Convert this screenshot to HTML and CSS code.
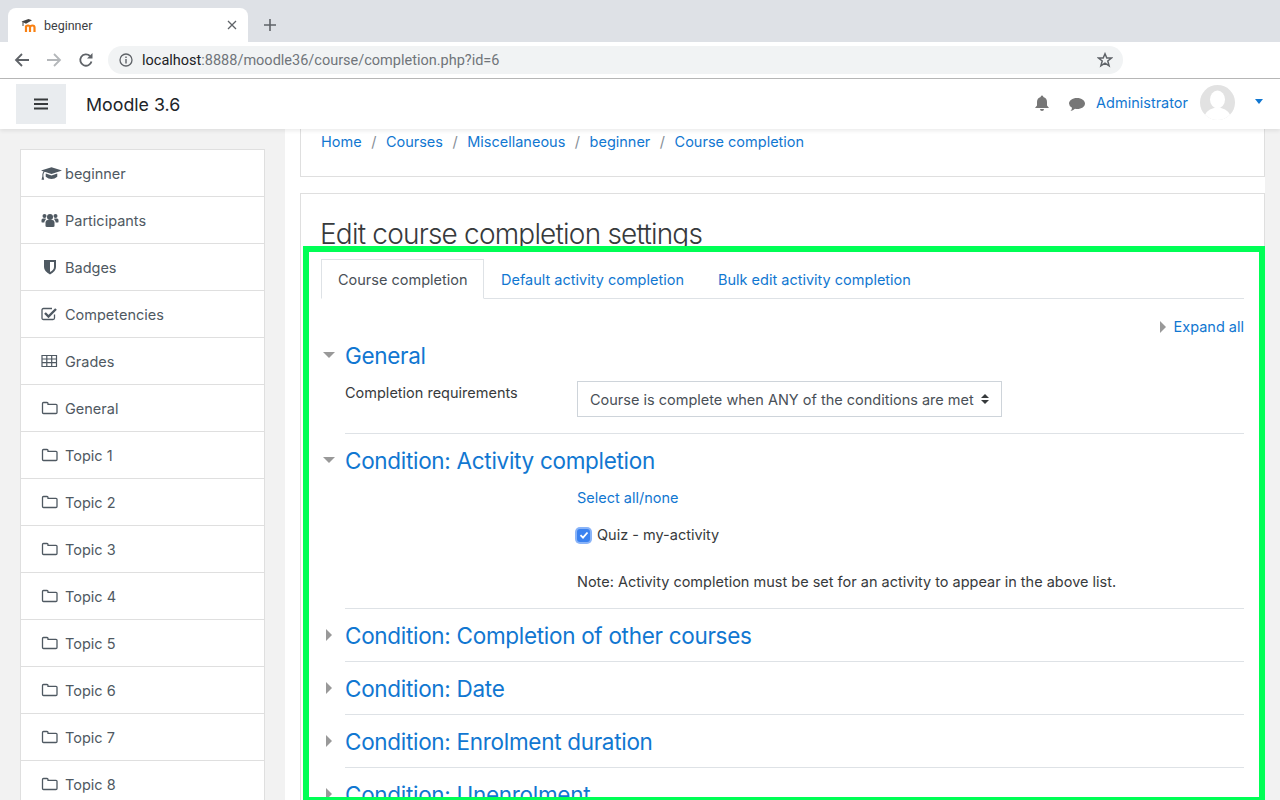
FILE: index.html
```html
<!DOCTYPE html>
<html lang="en">
<head>
    <meta charset="UTF-8">
    <meta name="viewport" content="width=device-width, initial-scale=1.0">
    <title>beginner</title>
    <link rel="stylesheet" href="styles.css">
</head>
<body>
    <div class="tab-strip">
        <div class="browser-tab">
            <svg class="favicon" viewBox="0 0 16 16" width="16" height="16">
                <path d="M5 8.500V15M9 8.500V15M13.500 15V10.500Q13.500 8.500 11.500 8.500Q9 8.500 9 10.500M9 10.500Q9 8.500 7 8.500Q5 8.500 5 10.500" fill="none" stroke="#f98012" stroke-width="2.200"/>
                <path d="M0.500 4.500L7.500 2L11 3.200L5 6.800Z" fill="#444"/>
                <path d="M2 5V9" stroke="#444" stroke-width="1"/>
            </svg>
            <span class="tab-title">beginner</span>
            <svg class="tab-close" viewBox="0 0 10 10" width="10" height="10"><path d="M1 1L9 9M9 1L1 9" stroke="#5f6368" stroke-width="1.300"/></svg>
        </div>
        <svg class="new-tab" viewBox="0 0 12 12" width="12" height="12"><path d="M6 0V12M0 6H12" stroke="#5f6368" stroke-width="1.600"/></svg>
    </div>

    <div class="toolbar">
        <svg class="tool-btn" viewBox="0 0 16 16" width="16" height="16"><path d="M15 8H2M8 2L2 8L8 14" fill="none" stroke="#5f6368" stroke-width="1.800"/></svg>
        <svg class="tool-btn" viewBox="0 0 16 16" width="16" height="16"><path d="M1 8H14M8 2L14 8L8 14" fill="none" stroke="#b4b7ba" stroke-width="1.800"/></svg>
        <svg class="tool-btn" viewBox="0 0 16 16" width="16" height="16"><path d="M13.500 9.500A5.700 5.700 0 1 1 12 4" fill="none" stroke="#5f6368" stroke-width="1.800"/><path d="M14.500 1V6.500H9Z" fill="#5f6368"/></svg>
        <div class="url-bar">
            <svg class="url-info" viewBox="0 0 14 14" width="14" height="14"><circle cx="7" cy="7" r="6" fill="none" stroke="#5f6368" stroke-width="1.300"/><path d="M7 6V10.500M7 3.500V5" stroke="#5f6368" stroke-width="1.400"/></svg>
            <span class="url-text"><span class="url-host">localhost</span>:8888/moodle36/course/completion.php?id=6</span>
            <svg class="url-star" viewBox="0 0 16 16" width="16" height="16"><path d="M8 1.800L9.800 6H14.500L10.800 9L12.100 13.800L8 11.200L3.900 13.800L5.200 9L1.500 6H6.200Z" fill="none" stroke="#5f6368" stroke-width="1.500"/></svg>
        </div>
    </div>

    <header class="navbar">
        <button class="nav-toggle">
            <svg viewBox="0 0 14 12" width="14" height="12"><path d="M0 1.500H14M0 6H14M0 10.500H14" stroke="#373a3c" stroke-width="2.200"/></svg>
        </button>
        <span class="brand">Moodle 3.6</span>
        <div class="nav-right">
            <svg class="nav-icon" viewBox="0 0 16 16" width="16" height="16"><path d="M8 0.500A1.300 1.300 0 0 1 9.300 2Q13 3 13 7V10.500L15 13H1L3 10.500V7Q3 3 6.700 2A1.300 1.300 0 0 1 8 0.500ZM6 14H10A2 2 0 0 1 6 14Z" fill="#777"/></svg>
            <svg class="nav-icon nav-icon-comment" viewBox="0 0 18 16" width="18" height="16"><path d="M9 2C13.700 2 17 4.500 17 7.500S13.700 13 9 13Q8 13 7 12.800Q5 14.500 2.500 15Q4 13.500 4 11.700Q1 10 1 7.500C1 4.500 4.300 2 9 2Z" fill="#777"/></svg>
            <a class="nav-user" href="#">Administrator</a>
            <svg class="avatar" viewBox="0 0 35 35" width="35" height="35">
                <clipPath id="avatar-clip"><circle cx="17.500" cy="17.500" r="17.500"/></clipPath>
                <g clip-path="url(#avatar-clip)">
                    <rect width="35" height="35" fill="#e2e2e2"/>
                    <ellipse cx="17.500" cy="14.500" rx="7.500" ry="9" fill="#fff"/>
                    <path d="M3 35Q5 25 14 23H21Q30 25 32 35Z" fill="#fff"/>
                </g>
            </svg>
            <span class="nav-caret"></span>
        </div>
    </header>

    <div class="page">
        <nav class="sidebar">
            <ul class="side-list">
                <li><svg class="side-icon side-icon-wide" viewBox="0 0 20 16"><path d="M10 2L20 5.200L10 8.500L3.500 6.400Q2.500 7.500 2.300 9V10.500L3 14H0.500L1.300 10.500V8.800Q1.500 7 2.500 6L0 5.200Z"/><path d="M4.500 8L10 9.800L15.500 8V11Q13 13.200 10 13.200T4.500 11Z"/></svg>beginner</li>
                <li><svg class="side-icon" viewBox="0 0 18 16"><circle cx="9" cy="5" r="3"/><circle cx="3.500" cy="4" r="2"/><circle cx="14.500" cy="4" r="2"/><path d="M4.500 10.500Q4.500 8 6.500 8H11.500Q13.500 8 13.500 10.500V14Q13.500 15 12 15H6Q4.500 15 4.500 14Z"/><path d="M0.500 8Q0.500 6.500 2 6.500H4.800Q5 7.500 4.300 8Q3.300 9 3.300 10.500H1Q0.500 10.500 0.500 9.800ZM17.500 8Q17.500 6.500 16 6.500H13.200Q13 7.500 13.700 8Q14.700 9 14.700 10.500H17Q17.500 10.500 17.500 9.800Z"/></svg>Participants</li>
                <li><svg class="side-icon" viewBox="0 0 18 16"><path d="M3 1H15V8Q15 12 9 15.500Q3 12 3 8ZM9 3V13Q13 11 13 8V3Z" fill-rule="evenodd"/></svg>Badges</li>
                <li><svg class="side-icon" viewBox="0 0 18 16"><path d="M13.500 8.500V12Q13.500 13.500 12 13.500H2.500Q1 13.500 1 12V4Q1 2.500 2.500 2.500H11" fill="none" stroke="#4f5962" stroke-width="1.300"/><path d="M4 7L7.500 10.500L15 3" fill="none" stroke="#4f5962" stroke-width="2.400"/></svg>Competencies</li>
                <li><svg class="side-icon" viewBox="0 0 18 16"><path d="M1 2.500H15.500V13.500H1ZM1 6H15.500M1 9.700H15.500M5.800 2.500V13.500M10.700 2.500V13.500" fill="none" stroke="#4f5962" stroke-width="1.200"/></svg>Grades</li>
                <li><svg class="side-icon" viewBox="0 0 18 16"><use href="#folder"/></svg>General</li>
                <li><svg class="side-icon" viewBox="0 0 18 16"><use href="#folder"/></svg>Topic 1</li>
                <li><svg class="side-icon" viewBox="0 0 18 16"><use href="#folder"/></svg>Topic 2</li>
                <li><svg class="side-icon" viewBox="0 0 18 16"><use href="#folder"/></svg>Topic 3</li>
                <li><svg class="side-icon" viewBox="0 0 18 16"><use href="#folder"/></svg>Topic 4</li>
                <li><svg class="side-icon" viewBox="0 0 18 16"><use href="#folder"/></svg>Topic 5</li>
                <li><svg class="side-icon" viewBox="0 0 18 16"><use href="#folder"/></svg>Topic 6</li>
                <li><svg class="side-icon" viewBox="0 0 18 16"><use href="#folder"/></svg>Topic 7</li>
                <li><svg class="side-icon" viewBox="0 0 18 16"><use href="#folder"/></svg>Topic 8</li>
            </ul>
            <svg width="0" height="0" class="defs"><defs><path id="folder" d="M2.500 13.500Q1.500 13.500 1.500 12.500V3.500Q1.500 2.500 2.500 2.500H6Q7 2.500 7 3.500V4.300H15Q16 4.300 16 5.300V12.500Q16 13.500 15 13.500Z" fill="none" stroke="#4f5962" stroke-width="1.300"/></defs></svg>
        </nav>

        <main class="main">
            <div class="card breadcrumb-card">
                <ol class="breadcrumb">
                    <li><a href="#">Home</a></li>
                    <li><a href="#">Courses</a></li>
                    <li><a href="#">Miscellaneous</a></li>
                    <li><a href="#">beginner</a></li>
                    <li><a href="#">Course completion</a></li>
                </ol>
            </div>

            <div class="card content-card">
                <h2 class="page-title">Edit course completion settings</h2>

                <div class="tabs">
                    <a class="tab active" href="#">Course completion</a>
                    <a class="tab" href="#">Default activity completion</a>
                    <a class="tab" href="#">Bulk edit activity completion</a>
                </div>

                <div class="expand-row">
                    <span class="arrow-right arrow-small"></span>
                    <a href="#">Expand all</a>
                </div>

                <section class="section section-general">
                    <h3 class="section-head"><span class="arrow-down"></span><a href="#">General</a></h3>
                    <div class="form-row">
                        <label class="form-label">Completion requirements</label>
                        <div class="select-box">
                            Course is complete when ANY of the conditions are met
                            <svg class="select-arrows" viewBox="0 0 8 12" width="8" height="12"><path d="M4 1L8 5H0ZM4 11L0 7H8Z" fill="#373a3c"/></svg>
                        </div>
                    </div>
                </section>

                <section class="section section-activity">
                    <h3 class="section-head"><span class="arrow-down"></span><a href="#">Condition: Activity completion</a></h3>
                    <div class="activity-body">
                        <a class="select-all" href="#">Select all/none</a>
                        <label class="check-row">
                            <span class="checkbox">
                                <svg viewBox="0 0 10 10" width="10" height="10"><path d="M1.500 5.200L4 7.700L8.500 2.500" fill="none" stroke="#fff" stroke-width="1.800"/></svg>
                            </span>
                            Quiz - my-activity
                        </label>
                        <p class="note">Note: Activity completion must be set for an activity to appear in the above list.</p>
                    </div>
                </section>

                <section class="section">
                    <h3 class="section-head"><span class="arrow-right"></span><a href="#">Condition: Completion of other courses</a></h3>
                </section>
                <section class="section">
                    <h3 class="section-head"><span class="arrow-right"></span><a href="#">Condition: Date</a></h3>
                </section>
                <section class="section">
                    <h3 class="section-head"><span class="arrow-right"></span><a href="#">Condition: Enrolment duration</a></h3>
                </section>
                <section class="section section-last">
                    <h3 class="section-head"><span class="arrow-right"></span><a href="#">Condition: Unenrolment</a></h3>
                </section>
            </div>
        </main>
    </div>

    <div class="highlight-box"></div>
</body>
</html>
```

FILE: styles.css
```css
* {
    box-sizing: border-box;
}
html, body {
    height: 100%;
}
body {
    margin: 0;
    width: 1280px;
    height: 800px;
    overflow: hidden;
    position: relative;
    background-color: #f2f2f2;
    font-family: Inter, "Liberation Sans", sans-serif;
    font-size: 14.5px;
    color: #373a3c;
}
a {
    color: #1177d1;
    text-decoration: none;
}

/* browser chrome */
.tab-strip {
    height: 42px;
    background-color: #dee1e6;
    display: flex;
    align-items: flex-end;
    padding-left: 8px;
}
.browser-tab {
    width: 240px;
    height: 34px;
    background: #fff;
    border-radius: 8px 8px 0 0;
    display: flex;
    align-items: center;
    padding: 0 11px 0 13px;
    font-family: Roboto, sans-serif;
    font-size: 12.5px;
    color: #3c4043;
}
.favicon {
    flex: none;
}
.tab-title {
    margin-left: 7px;
    flex: 1;
}
.new-tab {
    margin: 0 0 11px 16px;
}
.toolbar {
    height: 37px;
    background: #fff;
    border-bottom: 1px solid #b8b8b8;
    display: flex;
    align-items: center;
    padding: 0 157px 0 14px;
}
.tool-btn {
    margin-right: 16px;
    flex: none;
}
.url-bar {
    flex: 1;
    height: 28px;
    margin-left: -2px;
    background: #f1f3f4;
    border-radius: 14px;
    display: flex;
    align-items: center;
    padding: 0 10px 0 11px;
    font-family: Roboto, sans-serif;
    font-size: 14.5px;
    color: #70757a;
}
.url-text {
    margin-left: 9px;
    flex: 1;
}
.url-host {
    color: #202124;
}

/* moodle navbar */
.navbar {
    height: 50px;
    background: #fff;
    display: flex;
    align-items: center;
    padding: 0 17px 0 16px;
    box-shadow: 0 2px 4px rgba(0,0,0,0.08);
    position: relative;
    z-index: 2;
}
.nav-toggle {
    width: 50px;
    height: 40px;
    border: none;
    background: #e9ecef;
    display: flex;
    align-items: center;
    justify-content: center;
    padding: 0;
}
.brand {
    margin-left: 20px;
    font-size: 17.8px;
    color: #212529;
}
.nav-right {
    margin-left: auto;
    display: flex;
    align-items: center;
    margin-top: -3px;
}
.nav-icon {
    flex: none;
}
.nav-icon-comment {
    margin-left: 18px;
    margin-top: 3px;
}
.nav-user {
    margin-left: 10px;
}
.avatar {
    margin-left: 12px;
}
.nav-caret {
    margin: 0 0 2px 20px;
    border: 4.500px solid transparent;
    border-top: 5px solid #1177d1;
    border-bottom: none;
}

/* page */
.page {
    display: flex;
    align-items: flex-start;
}
.sidebar {
    width: 285px;
    flex: none;
    padding: 20px 20px 0;
}
.side-list {
    list-style: none;
    margin: 0;
    padding: 0;
    background: #fff;
    border: 1px solid #dfdfdf;
    border-bottom: none;
}
.side-list li {
    height: 47px;
    display: flex;
    align-items: center;
    padding-left: 20px;
    border-bottom: 1px solid #dfdfdf;
    color: #4f5962;
}
.side-icon {
    width: 18px;
    height: 16px;
    margin-right: 6px;
    fill: #4f5962;
    flex: none;
}
.side-icon-wide {
    width: 21px;
    height: 17px;
    margin-right: 3px;
}
.defs {
    position: absolute;
}
.main {
    width: 980px;
    flex: none;
    background: #fff;
    padding: 0 0 0 15px;
}
.card {
    background: #fff;
    border: 1px solid #dfdfdf;
}
.breadcrumb-card {
    height: 48px;
    border-top: none;
    padding: 4px 20px 0;
}
.breadcrumb {
    list-style: none;
    margin: 0;
    padding: 0;
    display: flex;
}
.breadcrumb li + li::before {
    content: "/";
    color: #868e96;
    padding: 0 9.5px;
}
.content-card {
    margin-top: 16px;
    padding: 20px 20px 0;
    height: 620px;
}
.page-title {
    margin: 0 0 0 -1px;
    font-size: 28px;
    letter-spacing: -0.8px;
    font-weight: 300;
    line-height: 40px;
    color: #373a3c;
}

/* tabs */
.tabs {
    margin-top: 5px;
    height: 40px;
    display: flex;
    border-bottom: 1px solid #dee2e6;
}
.tab {
    height: 40px;
    padding: 0 16px;
    line-height: 39px;
    border: 1px solid transparent;
    border-bottom: none;
    white-space: nowrap;
}
.tab.active {
    width: 163px;
    flex: none;
    color: #495057;
    background: #fff;
    border-color: #dee2e6;
    border-bottom: 1px solid #fff;
}
.expand-row {
    margin-top: 18px;
    display: flex;
    align-items: center;
    justify-content: flex-end;
    line-height: 20px;
}

/* collapsible sections */
.section {
    border-bottom: 1px solid #dee2e6;
    margin-left: 24px;
}
.section-last {
    border-bottom: none;
}
.section-head {
    margin: 0 0 0 -24px;
    height: 52px;
    display: flex;
    align-items: center;
    font-size: 22.500px;
    letter-spacing: -0.3px;
    font-weight: 400;
}
.section-general .section-head {
    margin-top: -8px;
    height: 53px;
}
.arrow-down, .arrow-right {
    display: block;
    flex: none;
    width: 24px;
    height: 10px;
    position: relative;
}
.arrow-down::before {
    content: "";
    position: absolute;
    left: 2px;
    top: 1px;
    border: 6px solid transparent;
    border-top: 6px solid #999;
    border-bottom: none;
}
.arrow-right::before {
    content: "";
    position: absolute;
    left: 5px;
    top: -1px;
    border: 6px solid transparent;
    border-left: 6px solid #999;
    border-right: none;
}
.arrow-small {
    width: 14px;
}
.arrow-small::before {
    left: 0;
}
.form-row {
    display: flex;
    padding-bottom: 16px;
    margin-top: -1px;
}
.form-label {
    width: 232px;
    line-height: 24px;
    color: #373a3c;
}
.select-box {
    width: 425px;
    height: 36px;
    border: 1px solid #ced4da;
    padding-left: 12px;
    display: flex;
    align-items: center;
    justify-content: space-between;
    padding-right: 12px;
    color: #495057;
}
.section-activity .section-head {
    height: 53px;
}
.activity-body {
    padding: 1px 0 0 232px;
    height: 121px;
}
.select-all {
    display: block;
    line-height: 20px;
    margin-top: 0;
}
.check-row {
    display: flex;
    align-items: center;
    margin-top: 17px;
    line-height: 20px;
}
.checkbox {
    width: 13px;
    height: 13px;
    background: #3b82f0;
    border-radius: 3px;
    margin-right: 7px;
    display: flex;
    align-items: center;
    justify-content: center;
    box-shadow: 0 0 0 2px #8ab4f8;
    flex: none;
}
.note {
    margin: 27px 0 0;
    line-height: 20px;
}

/* green marker drawn over the screenshot */
.highlight-box {
    position: absolute;
    left: 303px;
    top: 246px;
    width: 962px;
    height: 557px;
    border: 6px solid #00ff55;
    z-index: 3;
}
```
